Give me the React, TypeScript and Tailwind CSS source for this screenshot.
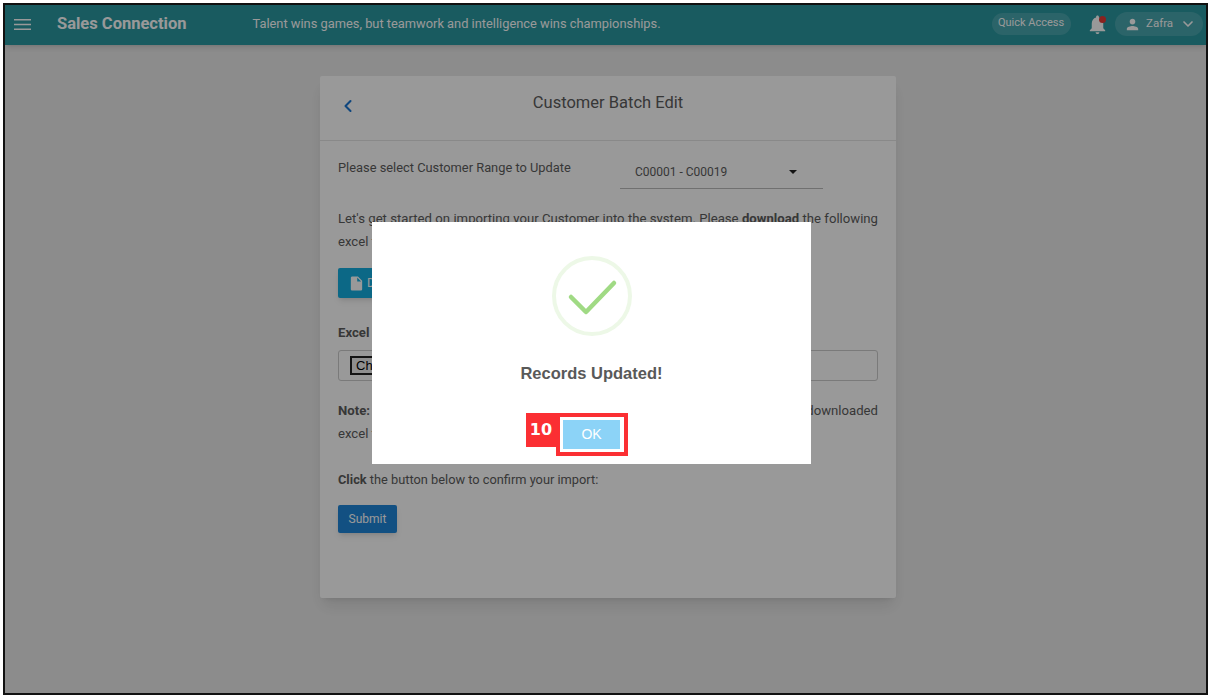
import { ChevronDown, ChevronLeft } from "lucide-react";

// Customer batch edit page, dimmed by the "Records Updated!" success dialog.

function MenuGlyph() {
  return (
    <svg width="17" height="11" viewBox="0 0 17 11" className="ml-[9px] shrink-0" fill="currentColor">
      <rect y="0" width="17" height="1.5" />
      <rect y="4.75" width="17" height="1.5" />
      <rect y="9.5" width="17" height="1.5" />
    </svg>
  );
}

function TopBar() {
  return (
    <header className="flex h-[40px] shrink-0 items-center bg-[#2a98a1] pb-[2px] text-white shadow-md">
      <MenuGlyph />
      <span className="ml-[26px] text-[16.5px] font-bold">Sales Connection</span>
      <span className="ml-[66px] text-[12.85px]">
        Talent wins games, but teamwork and intelligence wins championships.
      </span>
      <span className="ml-auto flex h-[22px] w-[79px] items-center justify-center rounded-full bg-white/15 pb-[1px] pr-[1px] text-[11px]">
        Quick Access
      </span>
      <span className="relative ml-[15px] flex">
        <svg width="23" height="23" viewBox="0 0 24 24" fill="currentColor">
          <path d="M12 22c1.1 0 2-.9 2-2h-4c0 1.1.9 2 2 2zm6-6v-5c0-3.07-1.64-5.64-4.5-6.32V4c0-.83-.67-1.5-1.5-1.5s-1.5.67-1.5 1.5v.68C7.63 5.36 6 7.92 6 11v5l-2 2v1h16v-1l-2-2z" />
        </svg>
        <span className="absolute left-[13px] top-[3px] h-[7px] w-[7px] rounded-full bg-[#e53935]" />
      </span>
      <span className="ml-[6px] mr-[3px] flex h-[24px] w-[88px] items-center rounded-full bg-white/15 pl-[9px] text-[11.5px]">
        <svg width="17" height="17" viewBox="0 0 24 24" fill="currentColor" className="shrink-0">
          <path d="M12 12c2.21 0 4-1.79 4-4s-1.79-4-4-4-4 1.79-4 4 1.79 4 4 4zm0 2c-2.67 0-8 1.34-8 4v2h16v-2c0-2.66-5.33-4-8-4z" />
        </svg>
        <span className="ml-[5px]">Zafra</span>
        <ChevronDown size={16} strokeWidth={2.5} className="ml-[7px] shrink-0" />
      </span>
    </header>
  );
}

function BatchCard() {
  return (
    <section className="ml-[315px] mt-[31px] h-[522px] w-[576px] rounded-[2px] bg-white text-[13.15px] text-[#5c5c5c] shadow-lg">
      <div className="relative flex h-[65px] justify-center border-b border-[#e4e4e4] pt-[15px] text-[16.5px]">
        <ChevronLeft size={20} strokeWidth={2.5} className="absolute left-[18px] top-[20px] text-[#1976d2]" />
        Customer Batch Edit
      </div>
      <div className="px-[18px]">
        <div className="flex h-[63px] items-start pt-[18px]">
          <span className="w-[233px] whitespace-nowrap text-[12.85px] leading-[18px]">
            Please select Customer Range to Update
          </span>
          <div className="ml-[49px] flex h-[30px] w-[203px] items-center justify-between border-b border-[#bbb] pb-[3px] pl-[15px] pr-[26px] text-[12px]">
            C00001 - C00019
            <span className="h-0 w-0 border-x-[4px] border-t-[4px] border-x-transparent border-t-[#222]" />
          </div>
        </div>
        <p className="mt-[3px] text-justify leading-[23px]">
          Let's get started on importing your Customer into the system. Please <b>download</b> the following excel
          template and fill in your data.
        </p>
        <button className="mt-[15px] flex h-[30px] w-[150px] items-center gap-[2px] rounded-[2px] bg-[#14aee0] pl-[10px] text-[12px] text-white shadow-md">
          <svg width="17" height="17" viewBox="0 0 24 24" fill="currentColor">
            <path d="M6 2c-1.1 0-1.99.9-1.99 2L4 20c0 1.1.89 2 1.99 2H18c1.1 0 2-.9 2-2V8l-6-6H6zm7 7V3.5L18.5 9H13z" />
          </svg>
          Download Template
        </button>
        <p className="mt-[26px] font-bold leading-[18px]">Excel File</p>
        <div className="mt-[8px] flex h-[31px] items-center rounded-[3px] border border-[#ccc] pl-[11px] font-['Liberation_Sans',sans-serif] text-[13px] text-black">
          <span className="border-2 border-[#222] bg-[#efefef] px-[4px] leading-[15px]">Choose File</span>
        </div>
        <p className="mt-[18px] text-justify leading-[23px]">
          <b>Note:</b> Please do not change the column headers and keep to the format of the downloaded
          excel template.
        </p>
        <p className="mt-[23px] text-[12.8px] leading-[23px]">
          <b>Click</b> the button below to confirm your import:
        </p>
        <button className="mt-[14px] h-[28px] w-[59px] rounded-[2px] bg-[#1f86d9] text-[12px] text-white shadow-md">
          Submit
        </button>
      </div>
    </section>
  );
}

function SuccessDialog() {
  return (
    <div className="absolute left-[367px] top-[217px] flex h-[242px] w-[439px] flex-col items-center bg-white font-['Liberation_Sans',sans-serif]">
      <svg width="80" height="80" viewBox="0 0 80 80" className="mt-[34px]" fill="none">
        <circle cx="40" cy="40" r="38" stroke="#edf8e7" strokeWidth="4" />
        <path d="M19 41 L34 56 L62 27" stroke="#a0da84" strokeWidth="4.5" strokeLinecap="round" strokeLinejoin="round" />
      </svg>
      <h2 className="mt-[27px] text-[16.5px] font-bold leading-[20px] text-[#595959]">Records Updated!</h2>
      {/* numbered annotation callout round the OK button */}
      <div className="absolute left-[154px] top-[191px] flex items-start">
        <span className="flex h-[34px] w-[30px] items-center justify-center bg-[#fb2f33] font-['DejaVu_Sans',sans-serif] text-[16px] font-bold text-white">
          10
        </span>
        <span className="border-[4px] border-[#fb2f33] py-[3px] pl-[3px] pr-[4px]">
          <button className="block h-[29px] w-[57px] bg-[#8cd3f7] text-[14px] text-white">OK</button>
        </span>
      </div>
    </div>
  );
}

export default function App() {
  return (
    <div className="h-[699px] w-[1211px] overflow-hidden bg-white pl-[3px] pt-[3px] font-['Roboto',sans-serif]">
      <div className="relative flex h-[692px] w-[1205px] flex-col overflow-hidden border-2 border-[#111] bg-[#eaeaea]">
        <TopBar />
        <BatchCard />
        <div className="absolute inset-0 bg-black/40" />
        <SuccessDialog />
      </div>
    </div>
  );
}
